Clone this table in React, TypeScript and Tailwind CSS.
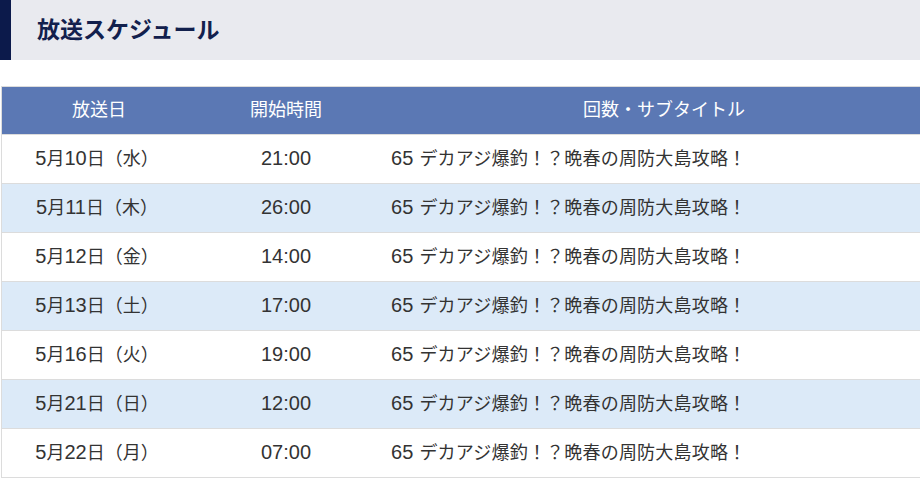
import React from "react";

const rows = [
  ["5月10日（水）", "21:00"],
  ["5月11日（木）", "26:00"],
  ["5月12日（金）", "14:00"],
  ["5月13日（土）", "17:00"],
  ["5月16日（火）", "19:00"],
  ["5月21日（日）", "12:00"],
  ["5月22日（月）", "07:00"],
];

const title = "65 デカアジ爆釣！？晩春の周防大島攻略！";

function T({ s }: { s: string }) {
  const parts = s.split(/([0-9: ]+)/).filter((p) => p.length > 0);
  return (
    <>
      {parts.map((p, i) =>
        /^[0-9: ]+$/.test(p) ? (
          <span key={i} className="text-[20px] leading-none">
            {p}
          </span>
        ) : (
          <span key={i}>{p}</span>
        )
      )}
    </>
  );
}

export default function App() {
  return (
    <div
      className="w-[920px] h-[479px] overflow-hidden bg-white"
      style={{ fontFamily: '"Liberation Sans", "Noto Sans CJK JP", sans-serif' }}
    >
      <div className="flex h-[60px] bg-[#e9eaef]">
        <div className="w-[11px] bg-[#0c1a4b]" />
        <h1 className="flex items-center pl-[26px] text-[23px] font-bold text-[#12204d]">
          放送スケジュール
        </h1>
      </div>
      <div className="mt-[26px] ml-[1px] w-[948px] border border-[#dcdcdc]">
        <div className="grid grid-cols-[190px_188px_1fr] h-[47px] bg-[#5b78b4] text-white text-[18px] items-center">
          <div className="text-center pl-[4px]">放送日</div>
          <div className="text-center">開始時間</div>
          <div className="text-center">回数・サブタイトル</div>
        </div>
        {rows.map(([d, t], i) => (
          <div
            key={i}
            className={`grid grid-cols-[190px_188px_1fr] h-[49px] items-center border-t border-[#dcdcdc] text-[18px] text-[#333333] ${
              i % 2 === 1 ? "bg-[#dceaf8]" : "bg-white"
            }`}
          >
            <div className="text-center">
              <T s={d} />
            </div>
            <div className="text-center">
              <T s={t} />
            </div>
            <div className="pl-[11px] tracking-[0.2px]">
              <T s={title} />
            </div>
          </div>
        ))}
      </div>
    </div>
  );
}
